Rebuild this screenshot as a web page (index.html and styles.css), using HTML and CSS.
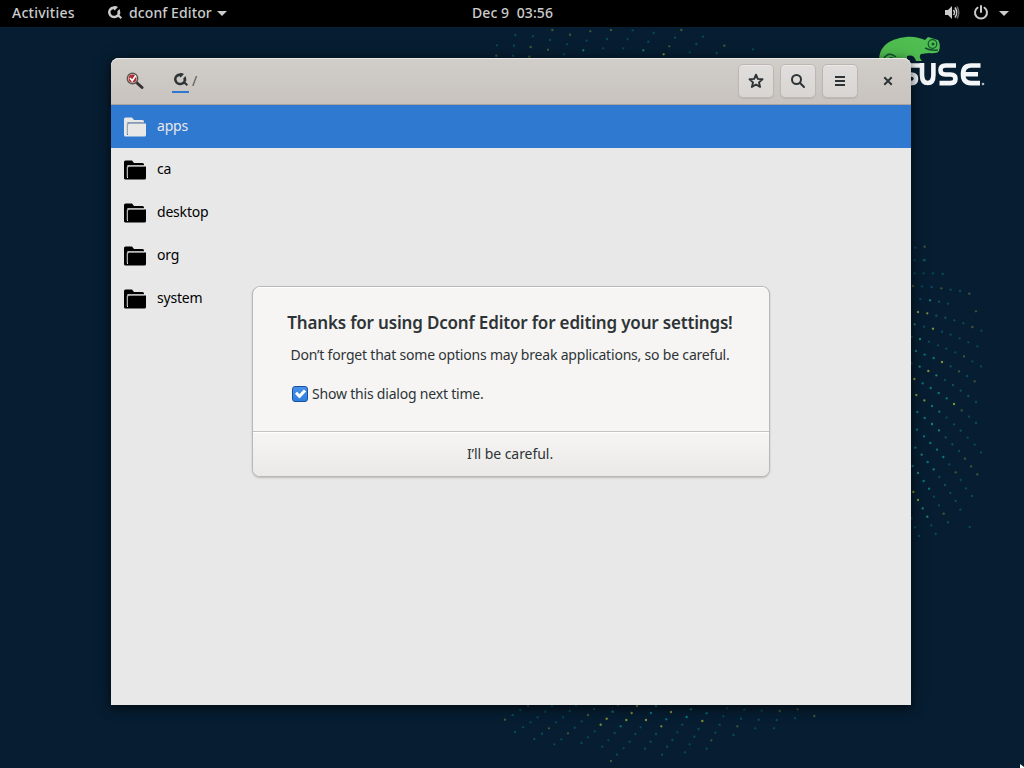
FILE: index.html
```html
<!DOCTYPE html>
<html lang="en">
<head>
<meta charset="utf-8">
<title>dconf Editor</title>
<link rel="stylesheet" href="styles.css">
</head>
<body>
<svg class="wallpaper" width="1024" height="768" viewBox="0 0 1024 768" aria-hidden="true">
  <g class="dots" transform="translate(900 220) scale(.33333)">
    <path class="teal strong" d="M48 393h0M74 404h0M68 490h0M92 504h0M116 519h0M96 558h0M118 575h0M52 576h0M74 594h0M51 629h0M72 649h0M46 683h0M91 669h0M111 689h0M130 711h0M83 726h0M38 738h0M71 783h0M87 806h0M101 414h0M140 535h0"/>
    <path class="green strong" d="M44 313h0M60 357h0M59 440h0M109 466h0M96 612h0M117 631h0M65 704h0M54 759h0M101 748h0M68 865h0M82 890h0M90 241h0"/>
    <path class="lime strong" d="M43 477h0M49 525h0M73 541h0M85 453h0M40 816h0M54 840h0M99 326h0M126 426h0M162 552h0M82 280h0M54 276h0"/>
    <path class="teal faint" d="M46 83h0M44 121h0M44 160h0M71 160h0M99 160h0M128 162h0M66 199h0M95 201h0M61 237h0M144 251h0M72 320h0M126 335h0M152 344h0M87 365h0M114 376h0M139 386h0M166 397h0M205 367h0M217 424h0M135 480h0M140 593h0M162 613h0M148 733h0M118 771h0M102 830h0M117 856h0M151 819h0M167 843h0M94 916h0M45 922h0M107 942h0M57 948h0M177 693h0M207 590h0M228 546h0M243 439h0M201 468h0M179 355h0M152 209h0M180 213h0M203 653h0M224 674h0M243 697h0M228 609h0M182 780h0M181 869h0M209 921h0M232 379h0M244 332h0M198 805h0M216 828h0"/>
    <path class="green faint" d="M71 121h0M117 245h0M109 287h0M136 293h0M163 301h0M190 310h0M152 439h0M159 495h0M182 512h0M205 528h0M182 632h0M137 652h0M157 673h0M135 795h0M144 907h0M35 350h0M35 430h0M35 895h0M74 120h0"/>
    <path class="lime faint" d="M74 80h0M39 198h0M124 205h0M217 321h0M228 274h0M192 409h0M177 454h0M185 571h0M224 484h0M195 716h0M213 739h0M167 757h0M232 763h0M131 881h0M208 221h0"/>
  </g>
  <g class="dots" transform="translate(500 690) scale(.33333)">
    <path class="teal strong" d="M338 65h0M453 69h0M573 58h0M560 81h0M468 48h0M499 88h0M620 70h0M362 109h0"/>
    <path class="lime strong" d="M411 48h0M395 69h0M379 90h0M513 66h0M438 90h0M320 86h0M302 104h0M484 109h0M607 93h0"/>
    <path class="teal faint" d="M38 75h0M61 60h0M92 97h0M69 112h0M113 82h0M136 65h0M156 48h0M168 97h0M189 82h0M209 63h0M228 47h0M282 57h0M245 94h0M224 113h0M284 124h0M344 129h0M325 151h0M422 112h0M406 132h0M468 132h0M547 104h0M532 127h0M596 117h0M670 79h0M681 55h0M733 59h0M785 62h0M723 86h0M776 89h0M830 90h0M885 85h0M659 104h0M646 128h0M700 135h0M184 148h0M163 163h0M244 159h0M307 170h0M371 175h0M435 176h0M452 155h0M389 155h0M517 150h0M501 170h0M569 163h0M583 140h0M486 194h0M555 187h0M620 176h0M766 115h0M822 115h0M351 194h0M126 131h0M103 147h0M45 126h0M264 142h0"/>
    <path class="lime faint" d="M84 47h0M15 89h0M147 115h0M204 130h0M264 75h0M354 46h0M634 151h0M712 109h0M839 63h0M893 58h0M333 213h0M943 78h0"/>
  </g>
  <g class="dots" transform="translate(460 24) scale(.33333)">
    <path class="teal faint" d="M166 33h0M219 37h0M111 64h0M162 65h0M159 95h0M270 48h0M321 61h0M312 91h0M380 50h0M441 45h0M430 73h0M503 46h0M490 73h0M518 19h0M581 27h0M565 53h0M645 41h0M729 38h0M709 60h0M689 85h0M770 87h0M879 76h0"/>
    <path class="green strong" d="M370 79h0M550 79h0"/>
    <path class="lime faint" d="M277 18h0M330 32h0M391 22h0M453 18h0M664 18h0M212 69h0M264 77h0M628 67h0M793 65h0M109 95h0M208 98h0"/>
    <path class="lime strong" d="M611 91h0"/>
  </g>
  <path fill="#4fbe50" d="M880 66C876 48 888 39 906 37C913 36 920 38 925 40L928 37L938 40Q941 44 939 51Q937 54 929 53L921 54Q918 57 922 61H916Q914 54 907 56V66Z"/>
  <circle cx="932.5" cy="44" r="4.300" fill="#4fbe50" stroke="#12552f" stroke-width="1.200"/>
  <circle cx="933" cy="44" r="1.500" fill="#12552f"/>
  <path d="M925 48q5 3 13 2M884 58q5-7 12-1M888 60q3-4 6-1" fill="none" stroke="#12552f" stroke-width="1.500"/>
  <g fill="none" stroke="#f4f6f8" stroke-width="4.600">
    <path d="M920 65.500h-10q-6 0-6 4.500t6 4.500h1q5 0 5 4.300t-5 4.300h-8"/>
    <path d="M922 63v12q0 8 5.700 8t5.700-8v-12"/>
    <path d="M956 65.500h-10.500q-5 0-5 4.500t5 4.500h5q5 0 5 4.300t-5 4.300h-11"/>
    <path d="M980.500 65.500h-9.500q-8 0-8 8.800t8 8.800h9M963 74.300h15"/>
  </g>
  <circle cx="983" cy="84" r="1.300" fill="#aeb8c2"/>
  <path d="M1020 764v4h4v-1z" fill="#fff"/>
</svg>

<div class="screen">
  <header class="topbar">
    <div class="topbar-left">
      <span class="activities">Activities</span>
      <span class="app-menu">
        <svg width="16" height="16" viewBox="0 0 16 16"><use href="#dconf"/></svg>
        <span class="app-name">dconf Editor</span>
        <i class="caret"></i>
      </span>
    </div>
    <span class="clock">Dec 9&nbsp; 03:56</span>
    <div class="topbar-right">
      <svg width="16" height="16" viewBox="0 0 16 16"><path fill="currentColor" d="M1 5h3l4-4v13l-4-4H1z"/><path d="M9.500 5q2 2.500 0 5M11 2.500q3.500 5 0 10" fill="none" stroke="currentColor" stroke-width="1.500"/><path d="M13 1.500q3.500 6 0 12" fill="none" stroke="#666" stroke-width="1.500"/></svg>
      <svg width="16" height="16" viewBox="0 0 16 16" fill="none" stroke="currentColor" stroke-width="2" stroke-linecap="round"><path d="M8 1v6M4.500 2.700a6 6 0 1 0 7 0"/></svg>
      <i class="caret"></i>
    </div>
  </header>

  <main class="window">
    <div class="headerbar">
      <svg class="app-icon" width="18" height="18" viewBox="0 0 18 18"><path d="M10.500 10.500l5.500 5" stroke="#333" stroke-width="3" stroke-linecap="round"/><circle cx="6.500" cy="6.500" r="5.200" fill="#e9dcdc" stroke="#555753" stroke-width="1.400"/><circle cx="6.500" cy="6.500" r="3.900" fill="#b52a30"/><path d="M4 6l2.200 2.800L9.800 3.500" fill="none" stroke="#fff" stroke-width="1.700"/></svg>
      <span class="path-root"><svg width="16" height="16" viewBox="0 0 16 16"><use href="#dconf"/></svg></span>
      <span class="slash">/</span>
      <div class="actions">
        <button class="btn" aria-label="Bookmarks"><svg width="16" height="16" viewBox="0 0 16 16"><path d="M8 1.700l1.800 4.200 4.700.4-3.500 3.100 1.100 4.500L8 11.500l-4.100 2.400L5 9.400 1.500 6.300l4.700-.4z" fill="none" stroke="currentColor" stroke-width="1.900" stroke-linejoin="round"/></svg></button>
        <button class="btn" aria-label="Search"><svg width="16" height="16" viewBox="0 0 16 16" fill="none" stroke="currentColor" stroke-width="2"><circle cx="6.500" cy="6.500" r="4.500"/><path d="M9.800 9.800L14 14" stroke-linecap="round"/></svg></button>
        <button class="btn" aria-label="Menu"><svg width="16" height="16" viewBox="0 0 16 16"><path d="M3 3h10v2H3zM3 7h10v2H3zM3 11h10v2H3z" fill="currentColor"/></svg></button>
        <button class="close" aria-label="Close"><svg width="16" height="16" viewBox="0 0 16 16"><path d="M4.300 4.300l7.400 7.400M11.700 4.300l-7.400 7.400" stroke="currentColor" stroke-width="2"/></svg></button>
      </div>
    </div>
    <ul class="list">
      <li class="row selected"><svg width="24" height="24" viewBox="0 0 24 24"><use href="#folder"/></svg><span>apps</span></li>
      <li class="row"><svg width="24" height="24" viewBox="0 0 24 24"><use href="#folder"/></svg><span>ca</span></li>
      <li class="row"><svg width="24" height="24" viewBox="0 0 24 24"><use href="#folder"/></svg><span>desktop</span></li>
      <li class="row"><svg width="24" height="24" viewBox="0 0 24 24"><use href="#folder"/></svg><span>org</span></li>
      <li class="row"><svg width="24" height="24" viewBox="0 0 24 24"><use href="#folder"/></svg><span>system</span></li>
    </ul>
    <section class="dialog" role="dialog">
      <div class="dialog-body">
        <h1>Thanks for using Dconf Editor for editing your settings!</h1>
        <p>Don’t forget that some options may break applications, so be careful.</p>
        <label class="check"><i class="box"><svg width="14" height="14" viewBox="0 0 14 14"><path d="M3 5.700l3.500 3.600L12 3.500" fill="none" stroke="#fff" stroke-width="3"/></svg></i><span>Show this dialog next time.</span></label>
      </div>
      <button class="confirm">I’ll be careful.</button>
    </section>
  </main>
</div>

<svg width="0" height="0" class="defs">
  <symbol id="dconf" viewBox="0 0 16 16"><path d="M5.500 2.700A4.800 4.800 0 1 0 11.800 6.200" fill="none" stroke="currentColor" stroke-width="2.500"/><path d="M4 2.500Q7.500-.3 11 2L7.600 5.400L6 3.800L4.500 5.500zM10.500 6L12.700 4L13.400 8.500L11 10zM9.500 10.500L11.500 9L15 12.500L13.800 14z" fill="currentColor"/></symbol>
  <symbol id="folder" viewBox="0 0 24 24"><path fill="currentColor" d="M1 20V4q0-1.500 1.500-1.500H9l2 2.500h8.500Q21 5 21 6.500V7H5.500Q4 7 4 8.500V20z"/><path fill="currentColor" d="M5 20V10Q5 8.500 6.500 8.500H23V20q0 1.500-1.500 1.500h-19Q1 21.500 1 20z"/><path class="fold" d="M4.300 19V9.300q0-1.500 1.500-1.500H21" fill="none" stroke-width="1.200"/></symbol>
</svg>
</body>
</html>
```
FILE: styles.css
```css
* { box-sizing: border-box; }
body {
  margin: 0;
  width: 1024px;
  height: 768px;
  overflow: hidden;
  background: #071e32;
  font: 14px/20px "Noto Sans", sans-serif;
  color: #2e3436;
}
svg { display: block; flex: none; }
button { border: 0; padding: 0; font: inherit; color: inherit; letter-spacing: inherit; }
.defs { position: absolute; }
.wallpaper { position: absolute; left: 0; top: 0; }
.dots path { stroke-width: 7; stroke-linecap: round; }
.teal { stroke: #08858c; }
.green { stroke: #239178; }
.lime { stroke: #94a43a; }
.faint { opacity: .42; }
.strong { opacity: .85; }
.screen { position: relative; height: 768px; }
.topbar {
  display: grid;
  grid-template-columns: 1fr auto 1fr;
  align-items: center;
  height: 27px;
  padding: 0 15px 1px 12px;
  background: #000;
  color: #ccc;
  font-weight: 500;
}
.topbar-left, .app-menu, .topbar-right { display: flex; align-items: center; }
.activities { width: 95px; letter-spacing: .25px; }
.app-name { width: 84px; margin-left: 6px; white-space: nowrap; letter-spacing: .1px; }
.clock { margin-left: 4px; letter-spacing: .1px; }
.caret {
  border: 5px solid transparent;
  border-top-color: currentColor;
  border-bottom: 0;
  margin-left: 4px;
}
.topbar-right { justify-content: flex-end; gap: 13px; }
.topbar-right .caret { margin-left: -3px; }
.window {
  position: relative;
  width: 800px;
  height: 647px;
  margin: 31px 0 0 111px;
  background: #e8e8e8;
  border-radius: 8px 8px 0 0;
  box-shadow: 0 3px 9px 1px rgba(0,0,0,.5), 0 0 20px rgba(0,0,0,.2);
}
.headerbar {
  display: flex;
  align-items: center;
  height: 47px;
  padding: 0 15px;
  background: linear-gradient(#d1cdc9, #c8c3bf);
  border-bottom: 1px solid #aaa39c;
  border-radius: 8px 8px 0 0;
  box-shadow: inset 0 1px #eceae8;
}
.path-root { width: 17px; height: 23px; margin-left: 28px; padding: 2px 0 0 1px; border-bottom: 2px solid #2f78d0; }
.slash { margin-left: 3px; color: #555a5b; }
.actions { display: flex; margin-left: auto; gap: 6px; }
.btn, .close { display: grid; place-items: center; width: 36px; height: 34px; }
.btn {
  background: linear-gradient(#e0dedc, #d8d5d2);
  border: 1px solid #bcb7b2;
  border-radius: 5px;
  box-shadow: inset 0 1px #ece9e7, 0 1px 1px rgba(0,0,0,.08);
}
.close { width: 16px; margin-left: 16px; background: none; }
.list { list-style: none; margin: 0; padding: 0; color: #000; letter-spacing: -.2px; }
.row { display: flex; align-items: center; height: 43px; padding-left: 12px; gap: 10px; }
.row span { padding-bottom: 2px; }
.fold { stroke: #a8a8a8; }
.selected { background: #3079d1; color: #e8e8e8; }
.selected .fold { stroke: #3079d1; }
.dialog {
  position: absolute;
  left: 141px;
  top: 228px;
  width: 518px;
  height: 191px;
  display: flex;
  flex-direction: column;
  border: 1px solid #bab8b6;
  border-radius: 8px;
  overflow: hidden;
  background: #f6f5f4;
  box-shadow: 0 1px 2px rgba(0,0,0,.2);
  letter-spacing: -.2px;
}
.dialog-body { flex: 1; padding: 24px 22px 0 20px; text-align: center; box-shadow: inset 0 1px #fff; white-space: nowrap; }
h1 { margin: 0; font-size: 17px; line-height: 24px; font-weight: 600; letter-spacing: -.18px; }
p { margin: 10px 0 0; }
.check { display: flex; align-items: center; margin: 19px 0 0 19px; gap: 4px; }
.box { width: 16px; height: 16px; border: 1px solid #15539e; border-radius: 3px; background: linear-gradient(#4990e7, #2f7fe0); }
.confirm { height: 45px; padding-right: 2px; border-top: 1px solid #c4c2c0; background: linear-gradient(#f6f5f4, #eae9e7); box-shadow: inset 0 1px #fff; letter-spacing: -.05px; }
```
